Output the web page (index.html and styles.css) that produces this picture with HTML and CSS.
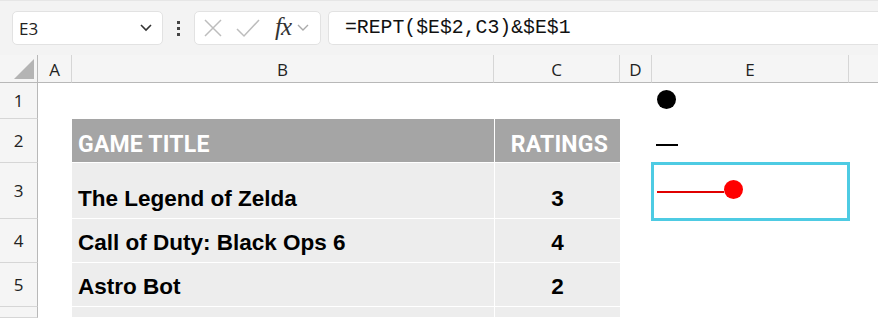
FILE: index.html
```html
<!DOCTYPE html>
<html>
<head>
<meta charset="utf-8">
<link rel="stylesheet" href="styles.css">
</head>
<body>
<div class="app">
  <div class="toolbar">
    <div class="namebox">
      <span class="ref">E3</span>
      <svg class="chev" width="14" height="10" viewBox="0 0 14 10"><path d="M2 2 L7 7 L12 2" fill="none" stroke="#333" stroke-width="1.6"/></svg>
    </div>
    <div class="vdots"><span></span><span></span><span></span></div>
    <div class="fxbox">
      <svg width="20" height="20" viewBox="0 0 20 20"><path d="M2 2 L18 18 M18 2 L2 18" stroke="#bdbdbd" stroke-width="1.5" fill="none"/></svg>
      <svg class="check" width="24" height="20" viewBox="0 0 24 20"><path d="M1 11 L8 18 L23 2" stroke="#bdbdbd" stroke-width="1.5" fill="none"/></svg>
      <span class="fx">fx</span>
      <svg width="14" height="10" viewBox="0 0 14 10"><path d="M2 2 L7 7 L12 2" fill="none" stroke="#aaa" stroke-width="1.4"/></svg>
    </div>
    <div class="formula">=REPT($E$2,C3)&amp;$E$1</div>
  </div>
  <div class="sheet">
    <div class="corner"><div class="tri"></div></div>
    <div class="colh">A</div>
    <div class="colh">B</div>
    <div class="colh">C</div>
    <div class="colh">D</div>
    <div class="colh">E</div>
    <div class="colh last"></div>

    <div class="rowh">1</div>
    <div class="cell"></div><div class="cell"></div><div class="cell"></div><div class="cell"></div>
    <div class="cell e"><span class="dot black"></span></div>
    <div class="cell"></div>

    <div class="rowh">2</div>
    <div class="cell"></div>
    <div class="cell th">GAME TITLE</div>
    <div class="cell th right">RATINGS</div>
    <div class="cell"></div>
    <div class="cell e"><span class="dash"></span></div>
    <div class="cell"></div>

    <div class="rowh">3</div>
    <div class="cell"></div>
    <div class="cell td">The Legend of Zelda</div>
    <div class="cell td num">3</div>
    <div class="cell"></div>
    <div class="cell e sel"><span class="line"></span><span class="dot red"></span></div>
    <div class="cell"></div>

    <div class="rowh">4</div>
    <div class="cell"></div>
    <div class="cell td">Call of Duty: Black Ops 6</div>
    <div class="cell td num">4</div>
    <div class="cell"></div><div class="cell"></div><div class="cell"></div>

    <div class="rowh">5</div>
    <div class="cell"></div>
    <div class="cell td">Astro Bot</div>
    <div class="cell td num">2</div>
    <div class="cell"></div><div class="cell"></div><div class="cell"></div>

    <div class="rowh"></div>
    <div class="cell"></div>
    <div class="cell td"></div>
    <div class="cell td num"></div>
    <div class="cell"></div><div class="cell"></div><div class="cell"></div>
  </div>
</div>
</body>
</html>
```

FILE: styles.css
```css
* { box-sizing: border-box; }
html, body { margin: 0; padding: 0; }
body {
  width: 878px;
  height: 318px;
  overflow: hidden;
  background: #fff;
  font-family: "Open Sans", "Noto Sans", sans-serif;
}
.app { display: flex; flex-direction: column; height: 318px; }

.toolbar {
  height: 55px;
  flex: none;
  background: #f3f3f3;
  border-top: 1px solid #e6e6e6;
  display: flex;
  align-items: center;
  padding: 0 0 0 12px;
}
.namebox {
  width: 151px;
  height: 34px;
  background: #fff;
  border: 1px solid #e2e2e2;
  border-radius: 5px;
  display: flex;
  align-items: center;
  justify-content: space-between;
  padding: 0 9px 0 6px;
}
.ref { font-size: 17px; color: #222; }
.vdots {
  width: 31px;
  display: flex;
  flex-direction: column;
  align-items: center;
  gap: 3px;
}
.vdots span { width: 3px; height: 3px; background: #444; }
.fxbox {
  width: 127px;
  height: 34px;
  background: #fff;
  border: 1px solid #e2e2e2;
  border-radius: 5px;
  display: flex;
  align-items: center;
  padding: 0 4px 0 8px;
}
.check { margin-left: 13px; }
.fx {
  font-family: "Liberation Serif", serif;
  font-style: italic;
  font-size: 25px;
  color: #333;
  margin: -3px 5px 0 15px;
  letter-spacing: -1px;
}
.formula {
  flex: 1;
  margin-left: 7px;
  height: 34px;
  background: #fff;
  border: 1px solid #e2e2e2;
  border-right: none;
  border-radius: 5px 0 0 5px;
  display: flex;
  align-items: center;
  padding-left: 16px;
  font-family: "Liberation Mono", monospace;
  font-size: 19.8px;
  color: #111;
}

.sheet {
  flex: 1;
  display: grid;
  grid-template-columns: 38px 34px 422px 126px 32px 197px 1fr;
  grid-template-rows: 28px 36px 44px 56px 44px 44px 1fr;
  background: #fff;
}
.corner {
  background: #f5f5f5;
  border-right: 1px solid #b8b8b8;
  border-bottom: 1px solid #b8b8b8;
  position: relative;
}
.tri {
  position: absolute;
  right: 3px;
  bottom: 3px;
  width: 0; height: 0;
  border-left: 20px solid transparent;
  border-bottom: 20px solid #b4b4b4;
}
.colh {
  background: #f5f5f5;
  border-bottom: 1px solid #b8b8b8;
  border-right: 1px solid #d6d6d6;
  display: flex;
  align-items: center;
  justify-content: center;
  font-size: 17px;
  color: #222;
  padding-top: 2px;
}
.colh.last { border-right: none; }
.rowh {
  background: #f5f5f5;
  border-right: 1px solid #b8b8b8;
  border-bottom: 1px solid #d6d6d6;
  display: flex;
  align-items: center;
  justify-content: center;
  font-size: 17px;
  color: #222;
}
.cell { position: relative; }
.th {
  background: #a5a5a5;
  color: #fff;
  font-family: "Roboto", "Liberation Sans", sans-serif;
  font-weight: 700;
  font-size: 23px;
  display: flex;
  align-items: flex-end;
  padding: 0 0 4px 6px;
  border-bottom: 1px solid #fff;
  letter-spacing: 0.2px;
}
.th.right { justify-content: flex-end; padding-right: 12px; border-left: 1px solid #fff; }
.td {
  background: #ededed;
  font-family: "Liberation Sans", Arial, sans-serif;
  font-weight: 700;
  font-size: 22.5px;
  color: #000;
  display: flex;
  align-items: flex-end;
  padding: 0 0 6px 6px;
  border-bottom: 1px solid #fff;
}
.td.num { justify-content: center; border-left: 1px solid #fff; padding-left: 0; }

.dot {
  position: absolute;
  width: 19px;
  height: 19px;
  border-radius: 50%;
}
.dot.black { background: #000; left: 5px; top: 7px; }
.dash {
  position: absolute;
  left: 4px;
  top: 25px;
  width: 22px;
  height: 1.5px;
  background: #000;
}
.sel {
  border: 3px solid #4ecbe3;
  margin: -1px -1px -2px -1px;
}
.line {
  position: absolute;
  left: 3px;
  top: 26px;
  width: 67px;
  height: 1.5px;
  background: #e00000;
}
.dot.red { background: #ff0000; left: 70px; top: 15px; }
```
